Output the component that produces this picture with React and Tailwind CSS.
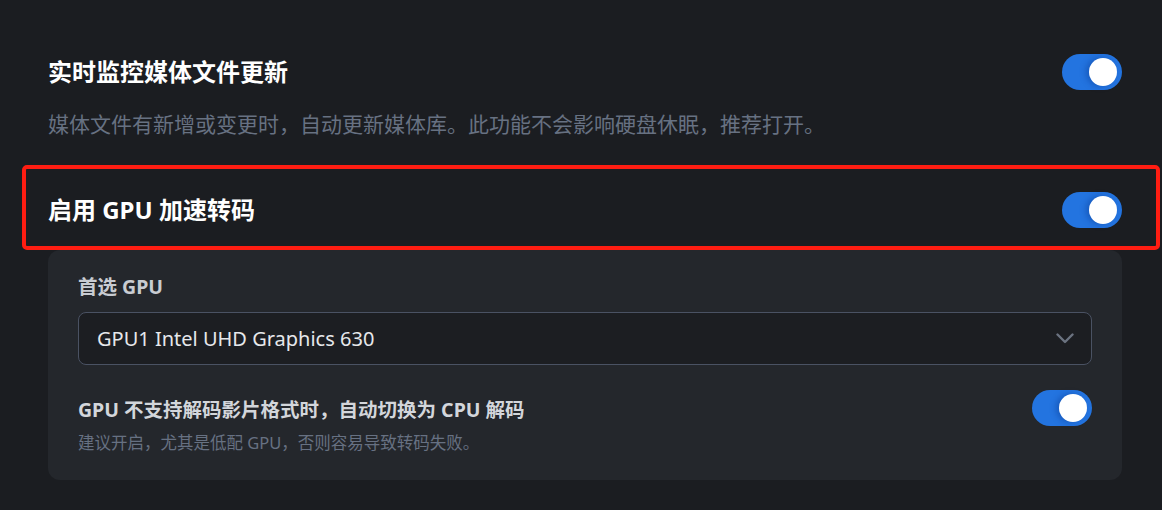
import React from 'react';

const font = { fontFamily: '"Noto Sans", "Noto Sans CJK SC", sans-serif' };

function Toggle() {
  return (
    <div className="relative w-[60px] h-[36px] shrink-0 rounded-full bg-[#2374e0]">
      <div className="absolute right-[5px] top-[4px] w-[28px] h-[28px] rounded-full bg-white shadow-[-3px_0_6px_rgba(0,40,120,0.35)]" />
    </div>
  );
}

function ChevronDown() {
  return (
    <svg width="18" height="11" viewBox="0 0 18 11" fill="none" className="text-[#6b7380]">
      <path d="M1.5 1.5 L9 9 L16.5 1.5" stroke="currentColor" strokeWidth={2.4} strokeLinecap="round" strokeLinejoin="round" />
    </svg>
  );
}

export default function App() {
  return (
    <div className="w-[1162px] h-[510px] overflow-hidden bg-[#1b1d21]" style={font}>
      <div className="pt-[54px] pl-[48px] pr-[40px]">
        {/* 实时监控 */}
        <div className="flex items-center justify-between h-[36px]">
          <div className="text-[24px] leading-[32px] font-bold text-white">实时监控媒体文件更新</div>
          <Toggle />
        </div>
        <div className="mt-[20px] text-[21px] leading-[28px] text-[#677182]">
          媒体文件有新增或变更时，自动更新媒体库。此功能不会影响硬盘休眠，推荐打开。
        </div>

        {/* GPU 加速 */}
        <div className="relative mt-[54px] flex items-center justify-between h-[36px]">
          <div className="text-[24px] leading-[32px] font-bold text-white">启用 GPU 加速转码</div>
          <Toggle />
          <div className="absolute left-[-26px] right-[-38px] top-[-27px] bottom-[-22px] border-[4.5px] border-[#ff1d12] rounded-[5px] pointer-events-none" />
        </div>

        <div className="mt-[22px] rounded-[12px] bg-[#24272c] pl-[30px] pr-[30px] pt-[23px] pb-[25px]">
          <div className="text-[19.5px] leading-[28px] font-bold text-[#c8ccd2]">首选 GPU</div>
          <div className="mt-[11px] h-[53px] flex items-center justify-between rounded-[8px] border border-[#4a5263] bg-[#1c1e22] pl-[18px] pr-[17px]">
            <span className="text-[20px] text-[#e6e8eb]">GPU1 Intel UHD Graphics 630</span>
            <ChevronDown />
          </div>
          <div className="mt-[25px] flex items-start justify-between">
            <div>
              <div className="mt-[6px] text-[19.5px] leading-[28px] font-bold text-[#d3d6db]">
                GPU 不支持解码影片格式时，自动切换为 CPU 解码
              </div>
              <div className="mt-[7px] text-[16.5px] leading-[24px] text-[#677182]">
                建议开启，尤其是低配 GPU，否则容易导致转码失败。
              </div>
            </div>
            <Toggle />
          </div>
        </div>
      </div>
    </div>
  );
}
